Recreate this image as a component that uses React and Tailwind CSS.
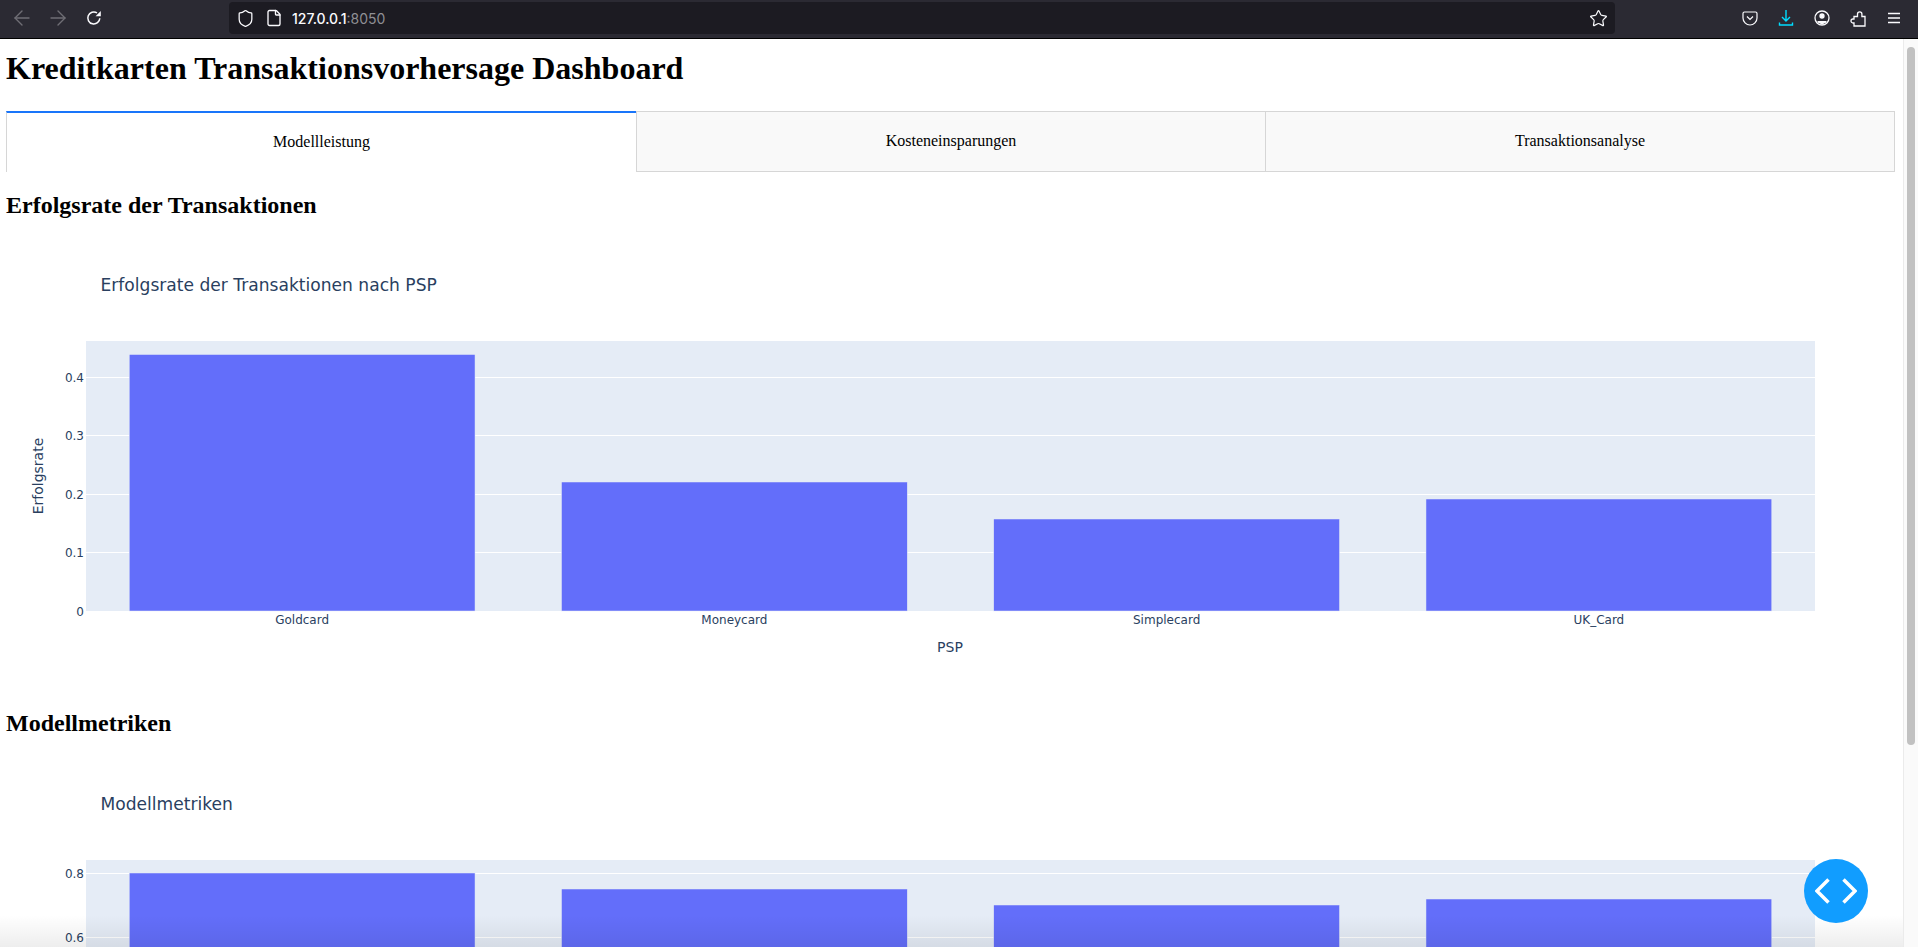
import React from 'react';
import { ArrowLeft, ArrowRight, Shield, File, Star } from 'lucide-react';

const TEXT = '#2a3f5f';
const FONT = '"DejaVu Sans", Verdana, sans-serif';

const BarChart = ({ title, yLabel, xLabel, ticks, bars, plotLeft = 80, plotTop = 100, plotHeight = 270 }) => {
  const plotWidth = 1729;
  const step = plotWidth / 4;
  return (
    <svg width="1889" height="450" className="block" style={{ fontFamily: FONT }}>
      <text x="94.5" y="50" fontSize="17.1" fill={TEXT}>{title}</text>
      <rect x={plotLeft} y={plotTop} width={plotWidth} height={plotHeight} fill="#E5ECF6" />
      {ticks.map(t => (
        <g key={t.label}>
          {t.label !== '0' && <rect x={plotLeft} y={t.y} width={plotWidth} height="1" fill="#fff" />}
          <text x={plotLeft - 2} y={t.y + 4.5} fontSize="12" textAnchor="end" fill={TEXT}>{t.label}</text>
        </g>
      ))}
      {bars.map((b, i) => (
        <g key={i}>
          <rect
            x={plotLeft + step * i + step * 0.1}
            y={b.top}
            width={step * 0.8}
            height={plotTop + plotHeight - b.top}
            fill="#636EFA"
            stroke="#E5ECF6"
            strokeWidth="0.5"
          />
          {b.name && (
            <text x={plotLeft + step * i + step / 2} y="383" fontSize="12" textAnchor="middle" fill={TEXT}>{b.name}</text>
          )}
        </g>
      ))}
      {xLabel && <text x="944" y="411" fontSize="14" textAnchor="middle" fill={TEXT}>{xLabel}</text>}
      {yLabel && <text transform="translate(37 235) rotate(-90)" fontSize="14" textAnchor="middle" fill={TEXT}>{yLabel}</text>}
    </svg>
  );
};

const ToolbarIcon = ({ children }) => (
  <div className="flex w-9 items-center justify-center">{children}</div>
);

const Toolbar = () => (
  <div className="flex h-[39px] shrink-0 items-center border-b border-black bg-[#2b2a33] pb-[2px] text-[#fbfbfe]">
    <div className="flex w-[229px] items-center pl-[10px]">
      <ArrowLeft size={24} strokeWidth={1.4} className="text-[#6f6e75]" />
      <ArrowRight size={24} strokeWidth={1.4} className="ml-3 text-[#6f6e75]" />
      <svg width="16" height="16" viewBox="0 0 16 16" fill="none" className="ml-[16px]">
        <path d="M13.8 8.2A6 6 0 1 1 11 2.9" stroke="#fbfbfe" strokeWidth="1.5" />
        <path d="M14.8 1v5.2H9.6z" fill="#fbfbfe" />
      </svg>
    </div>
    <div className="flex h-8 w-[1386px] items-center rounded bg-[#1c1b22] pl-[7px] pr-[7px]">
      <Shield size={19} strokeWidth={1.6} />
      <File size={18} strokeWidth={1.8} className="ml-[10px]" />
      <span className="ml-[9px] text-[14px] font-medium" style={{ fontFamily: 'Inter, sans-serif' }}>
        127.0.0.1<span className="font-normal text-[#8f8f94]">:8050</span>
      </span>
      <Star size={19} strokeWidth={1.5} className="ml-auto" />
    </div>
    <div className="ml-[117px] flex items-center">
      <ToolbarIcon>
        <svg width="16" height="15" viewBox="0 0 16 15" fill="none" stroke="#fbfbfe" strokeWidth="1.2">
          <path d="M2.5 1h11A1.5 1.5 0 0 1 15 2.5V7A7 7 0 0 1 1 7V2.5A1.5 1.5 0 0 1 2.5 1z" />
          <path d="M5 5.5 8 8.5l3-3" />
        </svg>
      </ToolbarIcon>
      <ToolbarIcon>
        <svg width="16" height="18" viewBox="0 0 16 18" fill="none" stroke="#00ddff" strokeWidth="1.4">
          <path d="M8 1v11M4 8l4 4 4-4M1.5 13.5v2.5h13v-2.5" />
        </svg>
      </ToolbarIcon>
      <ToolbarIcon>
        <svg width="16" height="16" viewBox="0 0 16 16" fill="none" stroke="#fbfbfe" strokeWidth="1.3">
          <circle cx="8" cy="8" r="7" />
          <circle cx="8" cy="6" r="2" fill="#fbfbfe" />
          <path d="M3.5 11h9v1.5l-4.5 2-4.5-2z" fill="#fbfbfe" stroke="none" />
        </svg>
      </ToolbarIcon>
      <ToolbarIcon>
        <svg width="16" height="17" viewBox="0 0 16 17" fill="none" stroke="#fbfbfe" strokeWidth="1.3">
          <path d="M4 16V13H3a2 2 0 0 1 0-4h1V6.5h3.5V4a2.2 2.2 0 0 1 4.4 0v2.5H15V16z" />
        </svg>
      </ToolbarIcon>
      <ToolbarIcon>
        <svg width="14" height="12" viewBox="0 0 14 12" stroke="#fbfbfe" strokeWidth="1.3">
          <path d="M1 1.5h12M1 6h12M1 10.5h12" />
        </svg>
      </ToolbarIcon>
    </div>
  </div>
);

const Tabs = () => (
  <div className="flex w-[1889px] text-[16px]">
    <div className="flex h-[61px] w-[630px] items-center justify-center border-l border-t-2 border-l-[#d6d6d6] border-t-[#1975fa] bg-white pb-[2px]">
      Modellleistung
    </div>
    <div className="flex h-[61px] w-[630px] items-center justify-center border border-[#d6d6d6] bg-[#f9f9f9] pb-[2px]">
      Kosteneinsparungen
    </div>
    <div className="flex h-[61px] w-[629px] items-center justify-center border border-l-0 border-[#d6d6d6] bg-[#f9f9f9] pb-[2px]">
      Transaktionsanalyse
    </div>
  </div>
);

export default function App() {
  return (
    <div className="relative flex h-[947px] w-[1918px] flex-col overflow-hidden bg-white text-black" style={{ fontFamily: '"Liberation Serif", serif' }}>
      <Toolbar />
      <div className="flex min-h-0 flex-1">
        <div className="min-w-0 flex-1 overflow-hidden pl-[6px]">
          <h1 className="mt-[11px] text-[32px] font-bold leading-[37px]">Kreditkarten Transaktionsvorhersage Dashboard</h1>
          <div className="mt-[24px]"><Tabs /></div>
          <h2 className="mt-[19px] text-[24px] font-bold leading-[28px]">Erfolgsrate der Transaktionen</h2>
          <div className="mt-[22px]">
            <BarChart
              title="Erfolgsrate der Transaktionen nach PSP"
              yLabel="Erfolgsrate"
              xLabel="PSP"
              ticks={[
                { label: '0.4', y: 136 },
                { label: '0.3', y: 194 },
                { label: '0.2', y: 253 },
                { label: '0.1', y: 311 },
                { label: '0', y: 370 },
              ]}
              bars={[
                { name: 'Goldcard', top: 113.5 },
                { name: 'Moneycard', top: 241 },
                { name: 'Simplecard', top: 278 },
                { name: 'UK_Card', top: 258 },
              ]}
            />
          </div>
          <h2 className="mt-[18px] text-[24px] font-bold leading-[28px]">Modellmetriken</h2>
          <div className="mt-[23px]">
            <BarChart
              title="Modellmetriken"
              ticks={[
                { label: '0.8', y: 113 },
                { label: '0.6', y: 177 },
              ]}
              bars={[{ top: 113 }, { top: 129 }, { top: 145 }, { top: 139 }]}
            />
          </div>
        </div>
        <div className="w-[15px] shrink-0 border-l border-[#ebebeb] bg-[#fafafa] pl-[3px] pt-[8px]">
          <div className="h-[698px] w-2 rounded-full bg-[#c1c1c1]" />
        </div>
      </div>
      <div className="pointer-events-none absolute bottom-0 left-0 right-[15px] h-[32px] bg-gradient-to-b from-transparent to-black/[.07]" />
      <div className="absolute left-[1804px] top-[859px] flex h-16 w-16 items-center justify-center rounded-full bg-[#119dff]">
        <svg width="42" height="26" viewBox="0 0 42 26" fill="none" stroke="#fff" strokeWidth="3.5">
          <path d="M13.5 1.5 2 13l11.5 11.5M28.5 1.5 40 13 28.5 24.5" />
        </svg>
      </div>
    </div>
  );
}
